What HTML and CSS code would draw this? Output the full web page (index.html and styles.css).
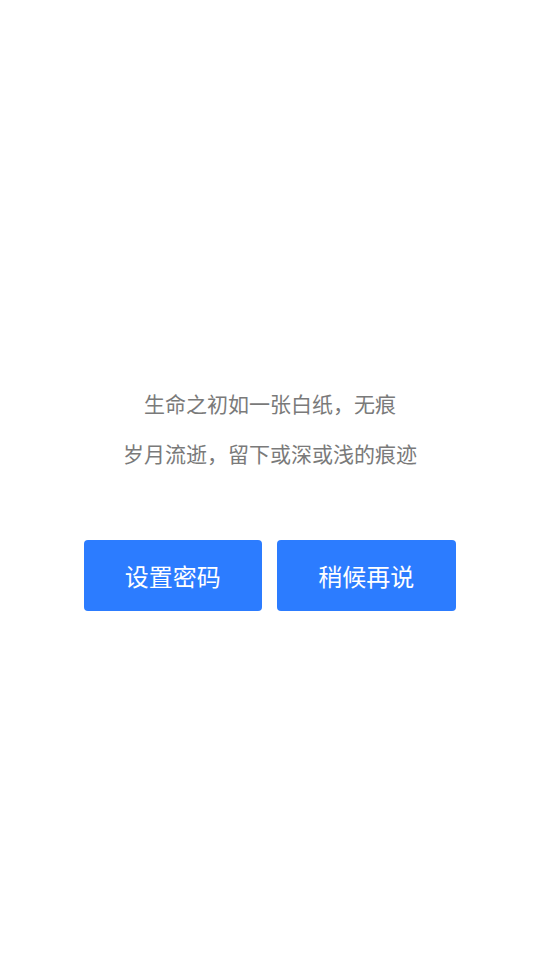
FILE: index.html
```html
<!DOCTYPE html>
<html lang="zh-CN">
<head>
    <meta charset="UTF-8">
    <meta name="viewport" content="width=device-width, initial-scale=1.0">
    <title>设置密码</title>
    <link rel="stylesheet" href="styles.css">
</head>
<body>
    <div class="page">
        <div class="intro">
            <p>生命之初如一张白纸，无痕</p>
            <p>岁月流逝，留下或深或浅的痕迹</p>
        </div>

        <div class="actions">
            <button class="btn">设置密码</button>
            <button class="btn">稍候再说</button>
        </div>
    </div>
</body>
</html>
```

FILE: styles.css
```css
* {
    margin: 0;
    padding: 0;
    box-sizing: border-box;
}

body {
    font-family: "Noto Sans CJK SC", "Noto Sans", sans-serif;
    background: #ffffff;
    width: 540px;
    height: 960px;
}

.page {
    padding-top: 378px;
    display: flex;
    flex-direction: column;
    align-items: center;
}

.intro {
    text-align: center;
    color: #7a7a7a;
    font-size: 21px;
    line-height: 50px;
}

.actions {
    display: flex;
    gap: 15px;
    margin-top: 62px;
    margin-right: 1px;
}

.btn {
    width: 178.5px;
    height: 71px;
    background: #2c7cff;
    color: #ffffff;
    border: none;
    border-radius: 4px;
    font-family: inherit;
    font-size: 24px;
}
```
